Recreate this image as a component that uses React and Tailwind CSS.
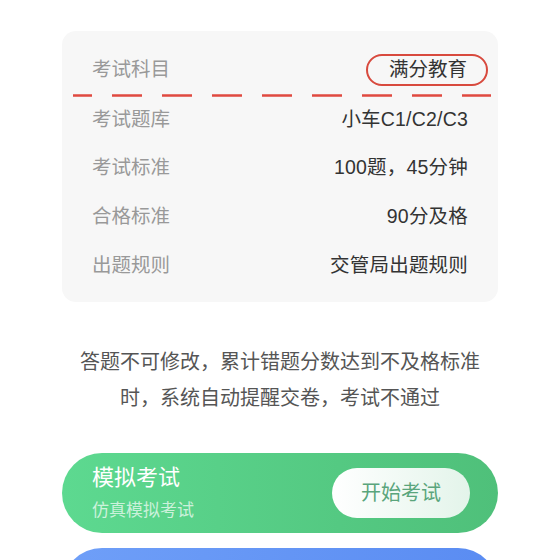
export default function App() {
  const rows = [
    ["考试题库", "小车C1/C2/C3", "h-[46px]"],
    ["考试标准", "100题，45分钟", "h-[49px]"],
    ["合格标准", "90分及格", "h-[49px]"],
    ["出题规则", "交管局出题规则", "h-[49px]"],
  ];
  return (
    <div
      className="w-[560px] h-[560px] overflow-hidden bg-white px-[62px] pt-[31px]"
      style={{ fontFamily: '"Liberation Sans", "Noto Sans CJK SC", sans-serif' }}
    >
      <div className="bg-[#f7f7f7] rounded-[14px] pb-[12px]">
        <div className="pl-[30px] pr-[10px] pt-[23px] flex items-center justify-between">
          <span className="text-[19.5px] leading-none text-[#999999]">考试科目</span>
          <span className="h-[32px] pl-[21px] pr-[19px] flex items-center rounded-full border-2 border-[#d84a3e] text-[19.5px] leading-none text-[#333333]">
            满分教育
          </span>
        </div>
        <div className="mt-[8px] px-[11px]">
          <svg width="418" height="3" className="block">
            <line
              x1="0"
              y1="1.5"
              x2="418"
              y2="1.5"
              stroke="#e04a40"
              strokeWidth="2.5"
              strokeDasharray="30 20"
              strokeDashoffset="11"
            />
          </svg>
        </div>
        {rows.map(([k, v, h]) => (
          <div key={k} className={`${h} px-[30px] flex items-center justify-between`}>
            <span className="text-[19.5px] leading-none text-[#999999]">{k}</span>
            <span className="text-[19.5px] leading-none text-[#333333] tracking-[0.2px]">{v}</span>
          </div>
        ))}
      </div>
      <p className="mt-[42px] text-center text-[20px] leading-[36px] text-[#555555]">
        答题不可修改，累计错题分数达到不及格标准
        <br />
        时，系统自动提醒交卷，考试不通过
      </p>
      <div className="mt-[37px] h-[80px] rounded-full bg-gradient-to-r from-[#5dd990] to-[#4fc07a] pl-[30px] pr-[28px] flex items-center justify-between">
        <div className="flex flex-col">
          <span className="text-[22px] leading-none text-white">模拟考试</span>
          <span className="mt-[13px] text-[17px] leading-none text-white/70">仿真模拟考试</span>
        </div>
        <div className="w-[138px] h-[50px] rounded-full bg-gradient-to-r from-white to-[#e3f4ea] flex items-center justify-center text-[20px] leading-none text-[#5aa57c]">
          开始考试
        </div>
      </div>
      <div className="mt-[15px] h-[80px] rounded-full bg-gradient-to-r from-[#6f9ff8] to-[#5a8cf2]" />
    </div>
  );
}
